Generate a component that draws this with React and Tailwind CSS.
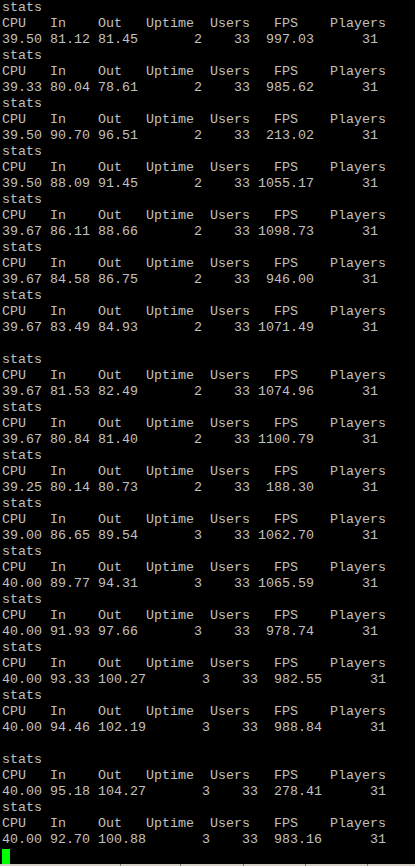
const runs = [
  ["39.50", "81.12", "81.45", 2, 33, "997.03", 31],
  ["39.33", "80.04", "78.61", 2, 33, "985.62", 31],
  ["39.50", "90.70", "96.51", 2, 33, "213.02", 31],
  ["39.50", "88.09", "91.45", 2, 33, "1055.17", 31],
  ["39.67", "86.11", "88.66", 2, 33, "1098.73", 31],
  ["39.67", "84.58", "86.75", 2, 33, "946.00", 31],
  ["39.67", "83.49", "84.93", 2, 33, "1071.49", 31],
  null,
  ["39.67", "81.53", "82.49", 2, 33, "1074.96", 31],
  ["39.67", "80.84", "81.40", 2, 33, "1100.79", 31],
  ["39.25", "80.14", "80.73", 2, 33, "188.30", 31],
  ["39.00", "86.65", "89.54", 3, 33, "1062.70", 31],
  ["40.00", "89.77", "94.31", 3, 33, "1065.59", 31],
  ["40.00", "91.93", "97.66", 3, 33, "978.74", 31],
  ["40.00", "93.33", "100.27", 3, 33, "982.55", 31],
  ["40.00", "94.46", "102.19", 3, 33, "988.84", 31],
  null,
  ["40.00", "95.18", "104.27", 3, 33, "278.41", 31],
  ["40.00", "92.70", "100.88", 3, 33, "983.16", 31],
];

const header = "CPU   In    Out   Uptime  Users   FPS    Players";

function pad(v, n) {
  return String(v).padStart(n, " ");
}

function buildLines() {
  const lines = [];
  runs.forEach((r) => {
    if (!r) {
      lines.push("");
      return;
    }
    const [cpu, inn, out, up, users, fps, players] = r;
    lines.push("stats");
    lines.push(header);
    lines.push(`${cpu} ${inn} ${out} ${pad(up, 7)} ${pad(users, 5)} ${pad(fps, 7)} ${pad(players, 7)}`);
  });
  return lines;
}

export default function App() {
  const lines = buildLines();

  return (
    <div className="w-[415px] h-[866px] bg-black flex flex-col overflow-hidden">
      <pre className="flex-1 pl-[2px] font-['Liberation_Mono',monospace] text-[13.333px] leading-4 text-[#c0c0c0] whitespace-pre">
        {lines.map((l, i) => (
          <div key={i} className="h-4">{l}</div>
        ))}
        <div className="h-4 flex items-center">
          <span className="block w-2 h-[15px] bg-[#00ff00]"></span>
        </div>
      </pre>
      {/* status strip at the window bottom */}
      <div className="h-[2px] bg-[#d4d0c8] flex">
        <div className="w-[120px]"></div>
        <div className="w-px bg-[#808080]"></div>
        <div className="w-[59px]"></div>
        <div className="w-px bg-[#808080]"></div>
        <div className="w-[62px]"></div>
        <div className="w-px bg-[#808080]"></div>
        <div className="w-[61px]"></div>
        <div className="w-px bg-[#808080]"></div>
        <div className="w-[61px]"></div>
        <div className="w-px bg-[#808080]"></div>
      </div>
    </div>
  );
}
